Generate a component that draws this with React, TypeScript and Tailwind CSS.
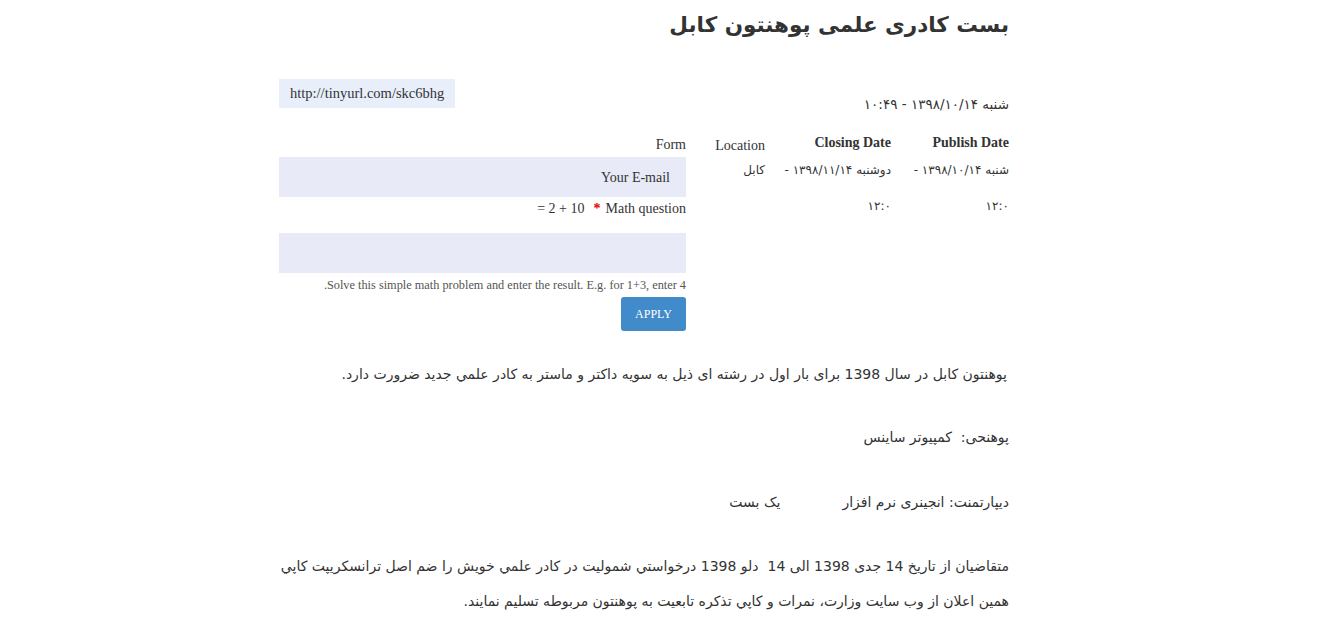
import React from "react";

const latin = "font-['Liberation_Serif','DejaVu_Sans',serif]";
const persian = "font-['DejaVu_Sans','Noto_Sans',sans-serif]";

export default function App() {
  return (
    <div className="min-h-[1410px] bg-white text-[#333]">
      <style>{`
        ::-webkit-scrollbar { width: 7px; }
        ::-webkit-scrollbar-track { background: #efefef; }
        ::-webkit-scrollbar-thumb { background: #c8c8c8; }
      `}</style>
      <div dir="rtl" className="ml-[279px] w-[730px]">
        {/* Title */}
        <h1 className={`${persian} pt-[6px] text-[21.5px] font-bold leading-[38px] text-[#333]`}>
          بست کادری علمی پوهنتون کابل
        </h1>

        {/* Meta + form */}
        <div className="mt-[35px] flex justify-between">
          {/* Right column: date + table */}
          <div className="w-[309px]">
            <div className={`${persian} mt-[16px] text-[13.5px] leading-[18px]`}>شنبه ۱۳۹۸/۱۰/۱۴ - ۱۰:۴۹</div>
            <div className="mt-[21px] flex">
              <div className="w-[118px]">
                <div className={`${latin} text-[14px] font-bold leading-[18px]`}>Publish Date</div>
                <div className={`${persian} mt-[9px] text-[12px] leading-[18px]`}>شنبه ۱۳۹۸/۱۰/۱۴ -</div>
                <div className={`${persian} mt-[18px] text-[12px] leading-[18px]`}>۱۲:۰</div>
              </div>
              <div className="w-[126px]">
                <div className={`${latin} text-[14px] font-bold leading-[18px]`}>Closing Date</div>
                <div className={`${persian} mt-[9px] text-[12px] leading-[18px]`}>دوشنبه ۱۳۹۸/۱۱/۱۴ -</div>
                <div className={`${persian} mt-[18px] text-[12px] leading-[18px]`}>۱۲:۰</div>
              </div>
              <div className="w-[65px]">
                <div className={`${latin} mt-[3px] text-[14px] leading-[18px]`}>Location</div>
                <div className={`${persian} mt-[6px] text-[12px] leading-[18px]`}>کابل</div>
              </div>
            </div>
          </div>

          {/* Left column: url + form */}
          <div className="flex w-[407px] flex-col items-end">
            <div dir="ltr" className={`${latin} flex h-[29px] w-[176px] items-center bg-[#e8effb] px-[11px] text-[14.5px]`}>
              http://tinyurl.com/skc6bhg
            </div>
            <div className="w-full">
              <div className={`${latin} mt-[28px] text-[14px] leading-[18px]`}>Form</div>
              <div className={`${latin} mt-[3px] flex h-[40px] w-full items-center bg-[#e8eaf8] pr-[16px] text-[14px]`}>
                Your E-mail
              </div>
              <div className={`${latin} mt-[3px] text-[14px] leading-[18px]`}>
                <span dir="ltr">Math question</span>
                <span className="ml-[9px] mr-[5px] font-bold text-[#e00000]">*</span>
                <span dir="ltr">= 2 + 10</span>
              </div>
              <div className="mt-[15px] h-[40px] w-full bg-[#e8eaf8]" />
              <div className={`${latin} mt-[4px] text-[12.3px] leading-[16px] text-[#555]`}>
                Solve this simple math problem and enter the result. E.g. for 1+3, enter 4.
              </div>
              <button className={`${latin} mt-[4px] h-[34px] w-[65px] rounded-[3px] bg-[#428bca] text-[12px] text-white`}>
                APPLY
              </button>
            </div>
          </div>
        </div>

        {/* Body */}
        <div className={`${persian} mt-[26px] text-[14px] leading-[35px] text-[#333]`}>
          <p className="pr-[2px]">پوهنتون کابل در سال 1398 برای بار اول در رشته ای ذیل به سویه داکتر و ماستر به کادر علمي جدید ضرورت دارد.</p>
          <p className="mt-[28px]">پوهنحی:&nbsp; کمپیوتر ساینس</p>
          <p className="mt-[30px]">
            دیپارتمنت: انجینری نرم افزار<span className="inline-block w-[62px]" />یک بست
          </p>
          <p className="mt-[29px]">
            متقاضیان از تاریخ 14 جدی 1398 الی 14&nbsp; دلو 1398 درخواستي شمولیت در کادر علمي خویش را ضم اصل ترانسکریپت کاپي همین اعلان از وب سایت وزارت، نمرات و کاپي تذکره تابعیت به پوهنتون مربوطه تسلیم نمایند.
          </p>
        </div>
      </div>
    </div>
  );
}
